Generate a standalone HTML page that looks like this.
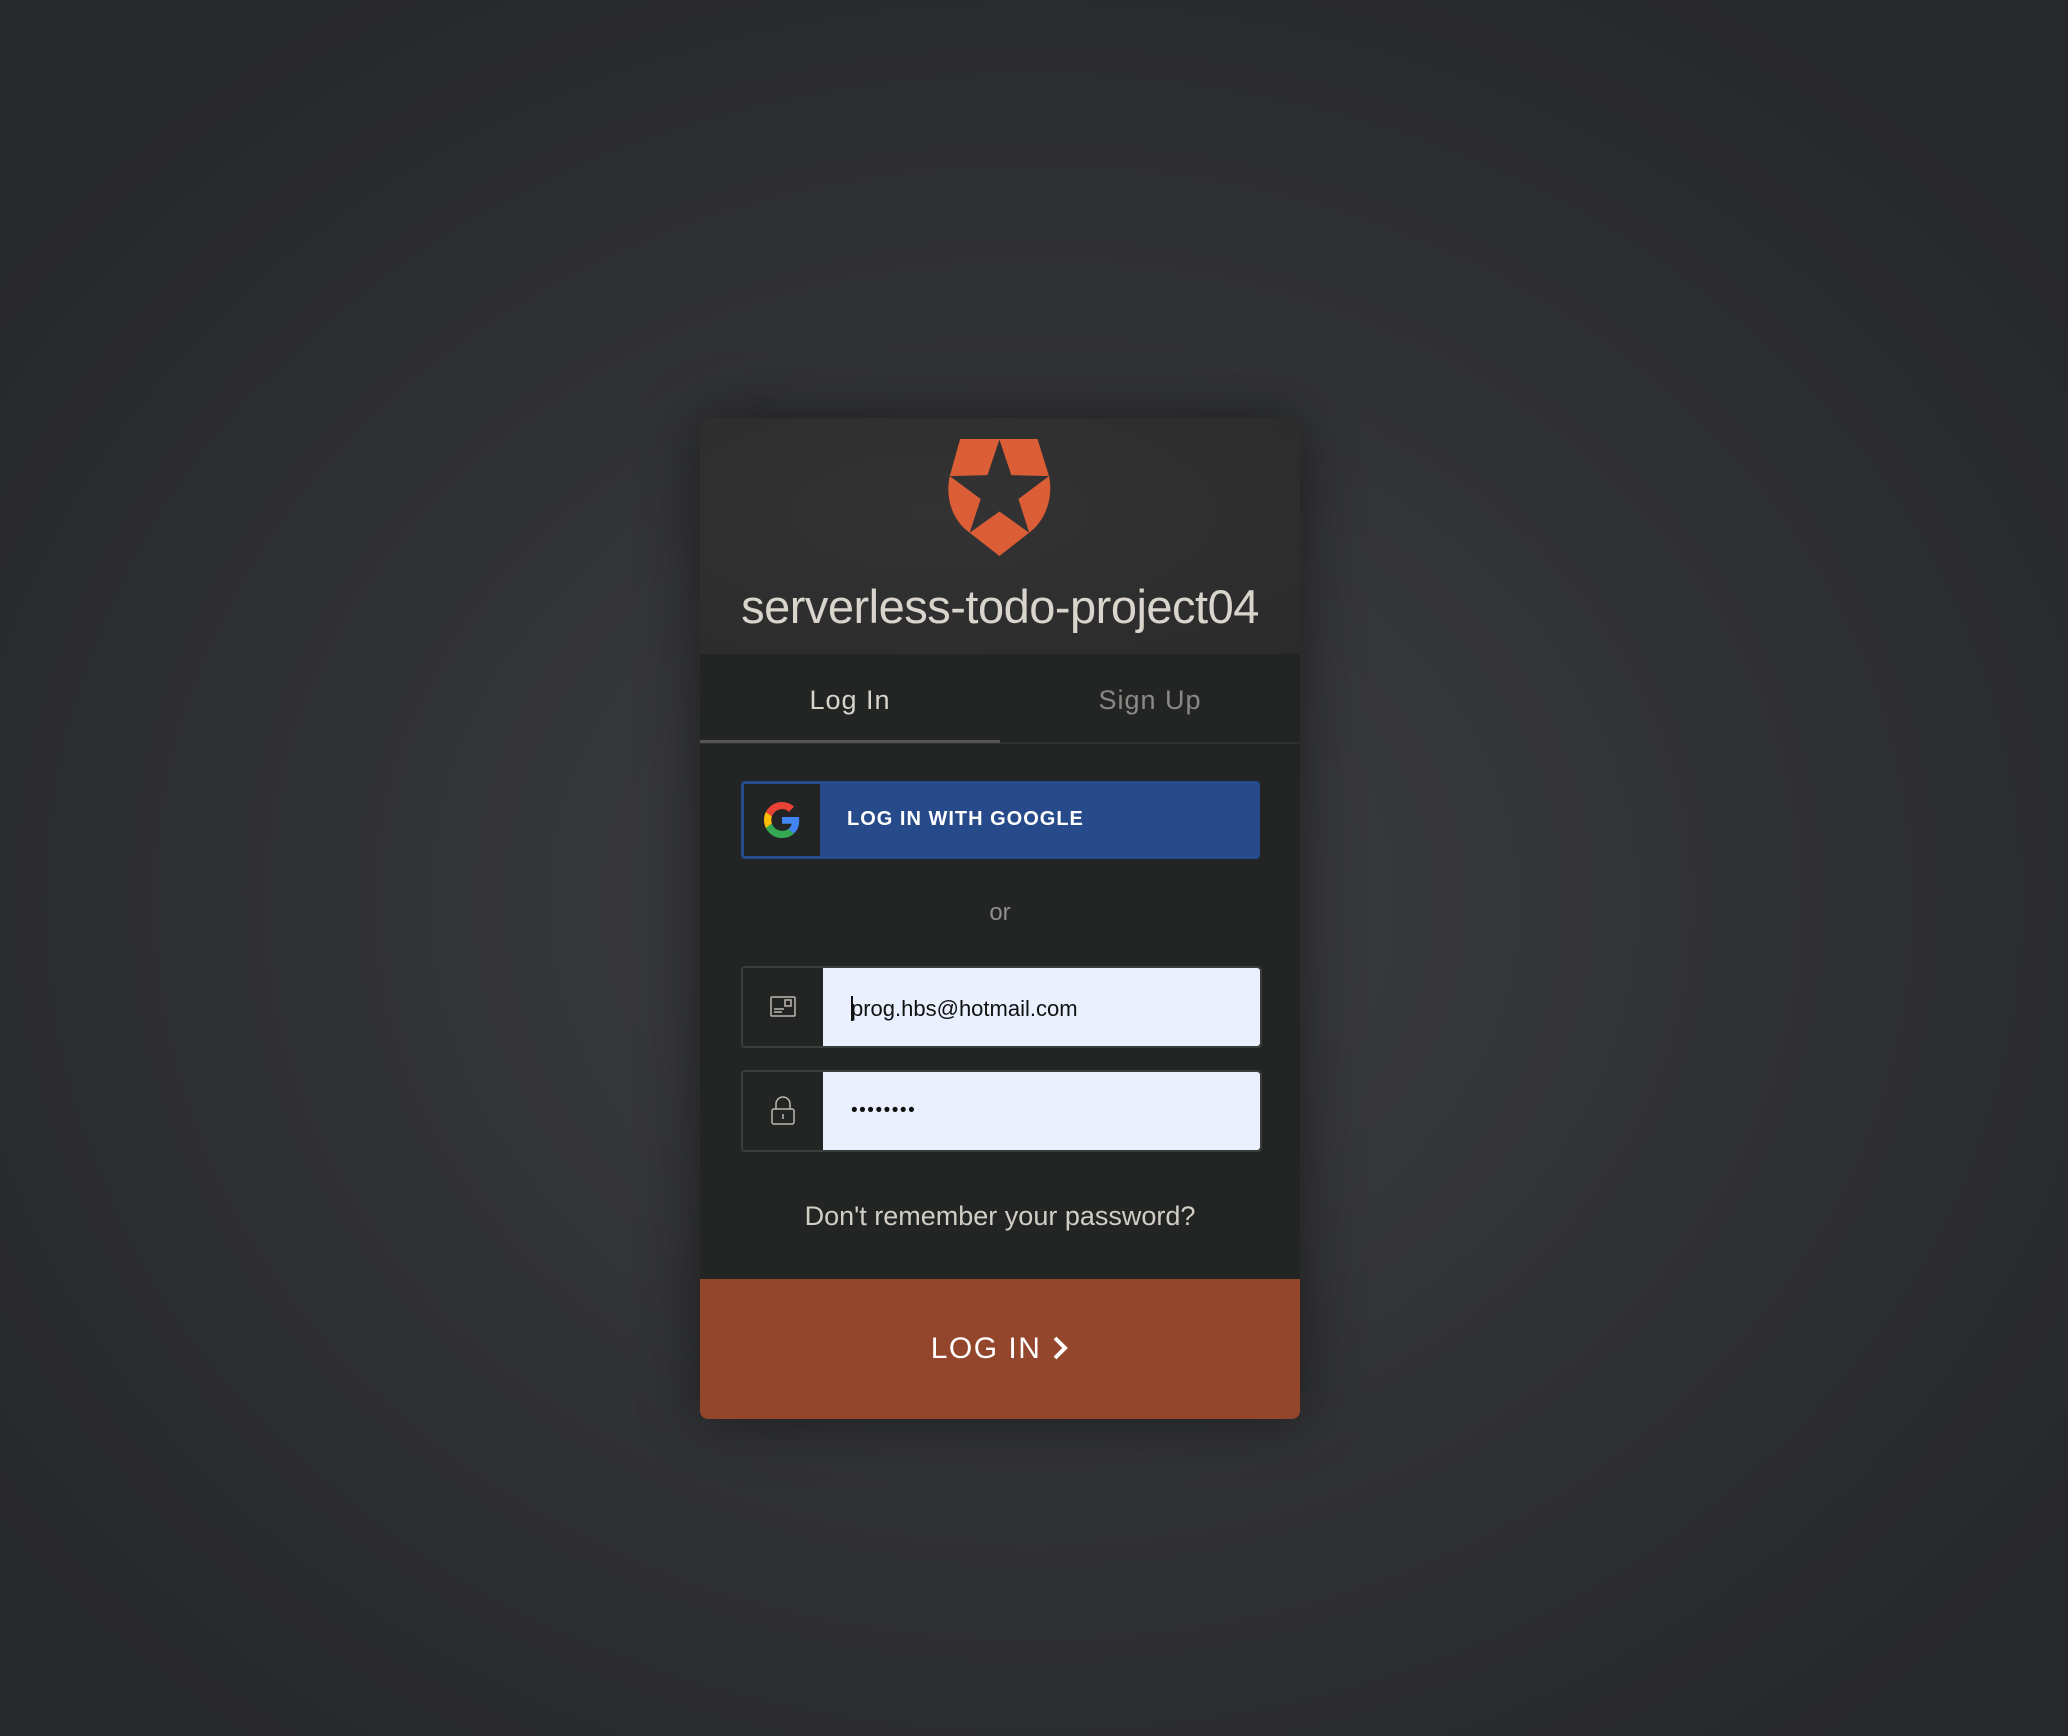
<!DOCTYPE html>
<html><head><meta charset="utf-8"><style>
html,body{margin:0;padding:0}
body{width:2068px;height:1736px;overflow:hidden;position:relative;
background:radial-gradient(ellipse 62% 62% at 50% 52%,#3c3d40 0%,#333437 45%,#2a2b2f 85%,#27282c 100%);
font-family:"Liberation Sans",sans-serif}
.card{position:absolute;left:700px;top:418px;width:600px;height:1001px;border-radius:8px;overflow:hidden;background:#232524;box-shadow:0 0 60px rgba(0,0,0,.45)}
.head{position:absolute;left:0;top:0;width:600px;height:236px;background:radial-gradient(ellipse at 40% 40%,#333333,#2b2b2b)}
.logo{position:absolute;left:247px;top:21px;width:104px;height:117px}
.title{position:absolute;left:0;width:600px;top:161px;text-align:center;color:#d9d5cc;font-size:47px;letter-spacing:-0.5px}
.tabs{position:absolute;top:236px;left:0;width:600px;height:88px;background:#232524;border-bottom:2px solid #2e302f}
.tab{position:absolute;top:31px;width:300px;text-align:center;font-size:27px;letter-spacing:1px}
.ul{position:absolute;left:0;top:322px;width:300px;height:3px;background:#545554}
.g{position:absolute;left:41px;top:363px;width:519px;height:78px;border-radius:4px;background:#264a8a}
.gbox{position:absolute;left:3px;top:3px;width:76px;height:72px;background:#232524;display:flex;align-items:center;justify-content:center}
.gt{position:absolute;left:106px;top:27px;color:#fff;font-weight:bold;font-size:20px;letter-spacing:1px}
.or{position:absolute;top:481px;width:600px;text-align:center;color:#8e8e8e;font-size:24px}
.inp{position:absolute;left:41px;width:517px;height:78px;border:2px solid #3b3c3c;border-radius:4px;background:#232524}
.ib{position:absolute;left:80px;top:0;right:0;bottom:0;background:#eaf0fe;border-radius:0 3px 3px 0}
.ic{position:absolute;left:0;top:0;width:80px;height:78px;display:flex;align-items:center;justify-content:center}
.it{position:absolute;left:28px;top:28px;font-size:22px;color:#111}
.fp{position:absolute;top:783px;width:600px;text-align:center;color:#d2cec6;font-size:27px}
.btn{position:absolute;left:0;top:861px;width:600px;height:140px;background:#93462b;color:#fff;font-size:30px;letter-spacing:1.5px;text-align:center;line-height:140px}
</style></head><body>
<div class="card">
 <div class="head">
  <svg class="logo" viewBox="650 90 262 347" preserveAspectRatio="none"><path fill="#db5e36" fill-rule="evenodd" d="M683,90 L878,90 L907,200 C918,262 900,330 857,368 L782,437 L707,368 C662,330 645,262 657,200 Z M782,92 L812,197 L907,200 L830,268 L857,368 L782,305 L707,368 L735,268 L657,200 L752,197 Z"/></svg>
  <div class="title">serverless-todo-project04</div>
 </div>
 <div class="tabs">
  <div class="tab" style="left:0;color:#d8d4cc">Log In</div>
  <div class="tab" style="left:300px;color:#8a8985">Sign Up</div>
 </div>
 <div class="ul"></div>
 <div class="g"><div class="gbox"><svg width="36" height="36" viewBox="0 0 48 48"><path fill="#EA4335" d="M24 9.5c3.54 0 6.71 1.220 9.21 3.6l6.85-6.850C35.9 2.38 30.47 0 24 0 14.62 0 6.51 5.38 2.56 13.22l7.98 6.19C12.43 13.72 17.74 9.5 24 9.5z"/><path fill="#4285F4" d="M46.98 24.55c0-1.57-.15-3.09-.38-4.55H24v9.020h12.94c-.58 2.96-2.26 5.48-4.78 7.18l7.73 6c4.51-4.18 7.09-10.36 7.09-17.65z"/><path fill="#FBBC05" d="M10.53 28.59c-.48-1.45-.76-2.99-.76-4.59s.27-3.14.76-4.59l-7.98-6.19C.92 16.46 0 20.12 0 24c0 3.88.92 7.54 2.56 10.78l7.97-6.19z"/><path fill="#34A853" d="M24 48c6.48 0 11.93-2.13 15.89-5.81l-7.73-6c-2.15 1.45-4.92 2.3-8.16 2.3-6.26 0-11.57-4.22-13.47-9.91l-7.98 6.19C6.51 42.62 14.62 48 24 48z"/></svg></div><div class="gt">LOG IN WITH GOOGLE</div></div>
 <div class="or">or</div>
 <div class="inp" style="top:548px"><div class="ic"><svg width="26" height="22" viewBox="0 0 26 22" fill="none" stroke="#bdb8ae" stroke-width="1.5"><rect x="1" y="1" width="24" height="19" rx="1"/><rect x="15" y="4" width="6" height="6"/><path d="M4 13h10M4 16h8"/></svg></div><div class="ib"><div class="it"><span style="border-left:2px solid #111;margin-right:-2px"></span>prog.hbs@hotmail.com</div></div></div>
 <div class="inp" style="top:652px"><div class="ic"><svg width="24" height="30" viewBox="0 0 24 30" fill="none" stroke="#bdb8ae" stroke-width="1.5"><path d="M5 13V8a7 7 0 0 1 14 0v5"/><rect x="1" y="13" width="22" height="15" rx="2"/><path d="M12 18v5"/></svg></div><div class="ib"><div class="it" style="top:28px;font-size:19px;letter-spacing:1.5px">••••••••</div></div></div>
 <div class="fp">Don't remember your password?</div>
 <div class="btn">LOG IN <svg width="18" height="26" viewBox="0 0 18 26" style="vertical-align:-3px"><path d="M4 3l10 10-10 10" fill="none" stroke="#fff" stroke-width="4"/></svg></div>
</div>
</body></html>
